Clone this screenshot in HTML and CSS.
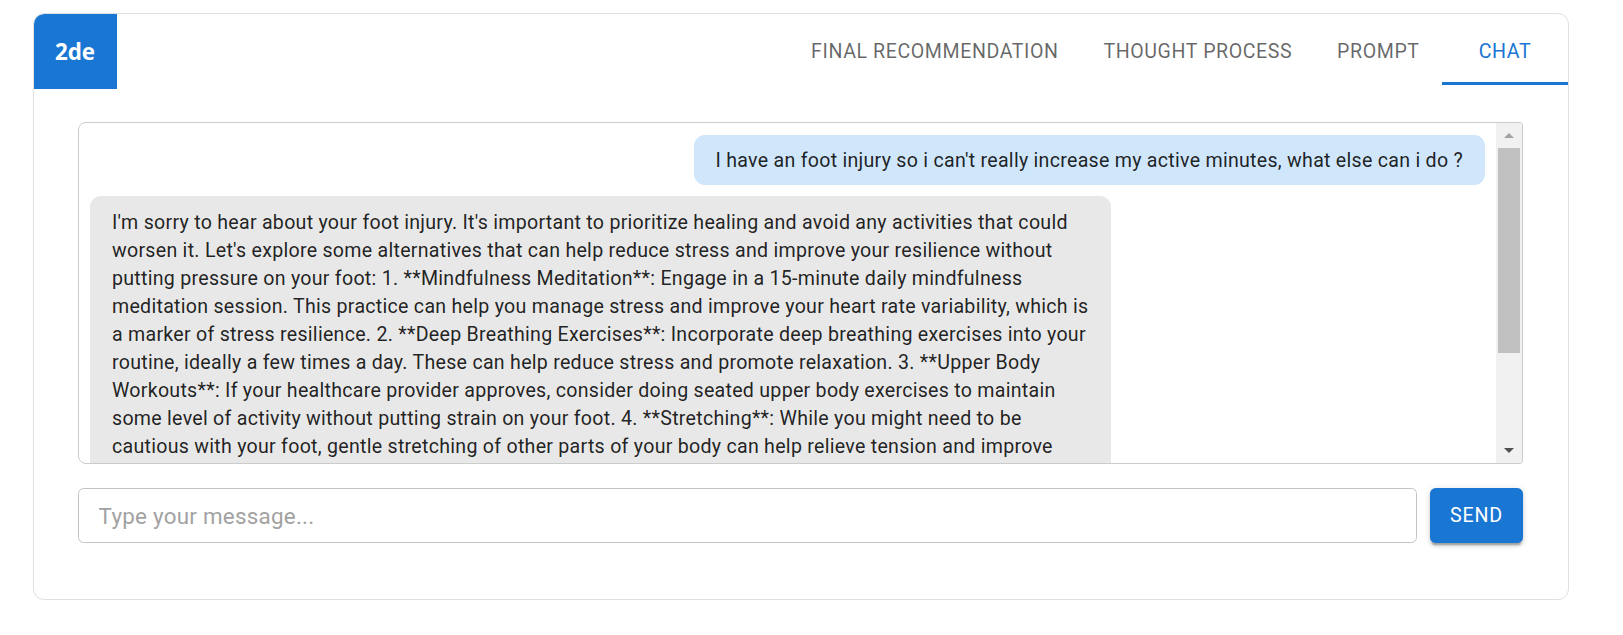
FILE: index.html
```html
<!DOCTYPE html>
<html lang="en">
<head>
<meta charset="utf-8">
<title>Chat</title>
<link rel="stylesheet" href="styles.css">
</head>
<body>
<div class="page">
  <div class="card">
    <header class="header">
      <div class="logo">2de</div>
      <nav class="tabs">
        <div class="tab">Final Recommendation</div>
        <div class="tab">Thought Process</div>
        <div class="tab">Prompt</div>
        <div class="tab active">Chat</div>
      </nav>
    </header>
    <main class="content">
      <div class="chat-box">
        <div class="messages">
          <div class="bubble user">I have an foot injury so i can't really increase my active minutes, what else can i do ?</div>
          <div class="bubble bot">I'm sorry to hear about your foot injury. It's important to prioritize healing and avoid any activities that could worsen it. Let's explore some alternatives that can help reduce stress and improve your resilience without putting pressure on your foot: 1. **Mindfulness Meditation**: Engage in a 15-minute daily mindfulness meditation session. This practice can help you manage stress and improve your heart rate variability, which is a marker of stress resilience. 2. **Deep Breathing Exercises**: Incorporate deep breathing exercises into your routine, ideally a few times a day. These can help reduce stress and promote relaxation. 3. **Upper Body Workouts**: If your healthcare provider approves, consider doing seated upper body exercises to maintain some level of activity without putting strain on your foot. 4. **Stretching**: While you might need to be cautious with your foot, gentle stretching of other parts of your body can help relieve tension and improve flexibility. 5. **Sleep Hygiene**: Focus on getting consistent, quality sleep, which supports recovery and resilience.</div>
        </div>
        <div class="scrollbar">
          <div class="sb-btn"><span class="arrow-up"></span></div>
          <div class="sb-thumb"></div>
          <div class="sb-track"></div>
          <div class="sb-btn"><span class="arrow-down"></span></div>
        </div>
      </div>
      <form class="composer">
        <input class="input" type="text" placeholder="Type your message...">
        <button class="send" type="button">Send</button>
      </form>
    </main>
  </div>
</div>
</body>
</html>
```

FILE: styles.css
```css
* { box-sizing: border-box; }

html, body {
  margin: 0;
  background: #ffffff;
  font-family: Roboto, "Liberation Sans", Arial, sans-serif;
  color: rgba(0, 0, 0, 0.87);
}

.page {
  padding: 13px 0 0 33px;
}

.card {
  width: 1536px;
  border: 1px solid #e0e0e0;
  border-radius: 11px;
  overflow: hidden;
  background: #fff;
}

.header {
  display: flex;
  align-items: center;
  height: 75px;
}

.logo {
  width: 84px;
  height: 75px;
  margin: -1px 0 0 -1px;
  background: #1976d2;
  color: #fff;
  font-family: "Open Sans", "Noto Sans", sans-serif;
  font-weight: 700;
  font-size: 22.4px;
  display: flex;
  align-items: center;
  justify-content: center;
  border-top-left-radius: 11px;
}

.tabs {
  margin-left: auto;
  display: flex;
  height: 67px;
}

.tab {
  display: flex;
  align-items: center;
  justify-content: center;
  min-width: 126px;
  padding: 0 22.4px;
  font-size: 19.6px;
  font-weight: 400;
  letter-spacing: 0.58px;
  text-transform: uppercase;
  color: rgba(0, 0, 0, 0.6);
}

.tab.active {
  color: #1976d2;
  box-shadow: inset 0 -3px 0 #1976d2;
}

.content {
  padding: 33px 45px 56px 44px;
}

.chat-box {
  display: flex;
  height: 342px;
  border: 1px solid #cccccc;
  border-radius: 8px 3px 3px 8px;
  overflow: hidden;
}

.messages {
  flex: 1;
  min-width: 0;
  overflow: hidden;
  display: flex;
  flex-direction: column;
  gap: 11px;
  padding: 12px 11px 0 11px;
}

.bubble {
  padding: 12px 22px 10px;
  border-radius: 11px;
  font-size: 19.6px;
  line-height: 28px;
  letter-spacing: 0.27px;
}

.bubble.user {
  align-self: flex-end;
  background: #d0e6fb;
}

.bubble.bot {
  align-self: flex-start;
  max-width: 1021px;
  padding-top: 13px;
  background: #e8e8e8;
}

.scrollbar {
  width: 26px;
  flex: none;
  display: flex;
  flex-direction: column;
  background: #f1f1f1;
}

.sb-btn {
  height: 25px;
  display: flex;
  align-items: center;
  justify-content: center;
}

.arrow-up {
  width: 0;
  height: 0;
  border-left: 5.5px solid transparent;
  border-right: 5.5px solid transparent;
  border-bottom: 5px solid #a3a3a3;
}

.arrow-down {
  width: 0;
  height: 0;
  border-left: 5.5px solid transparent;
  border-right: 5.5px solid transparent;
  border-top: 5px solid #505050;
}

.sb-thumb {
  height: 205px;
  margin: 0 2px;
  background: #c1c1c1;
}

.sb-track {
  flex: 1;
}

.composer {
  display: flex;
  gap: 13px;
  margin: 24px 0 0 0;
}

.input {
  flex: 1;
  height: 55px;
  border: 1px solid #c4c4c4;
  border-radius: 5.6px;
  padding: 0 19.6px;
  font-family: Roboto, "Liberation Sans", Arial, sans-serif;
  font-size: 22.4px;
  letter-spacing: 0.25px;
  color: rgba(0, 0, 0, 0.87);
  outline: none;
}

.input::placeholder {
  color: #a2a2a2;
}

.send {
  width: 93px;
  height: 55px;
  border: none;
  border-radius: 5.6px;
  background: #1976d2;
  color: #fff;
  font-family: Roboto, "Liberation Sans", Arial, sans-serif;
  font-size: 19.6px;
  font-weight: 400;
  letter-spacing: 0.8px;
  text-transform: uppercase;
  box-shadow: 0 4px 1.4px -2.8px rgba(0,0,0,0.2), 0 2.8px 2.8px 0 rgba(0,0,0,0.14), 0 1.4px 7px 0 rgba(0,0,0,0.12);
}
```
